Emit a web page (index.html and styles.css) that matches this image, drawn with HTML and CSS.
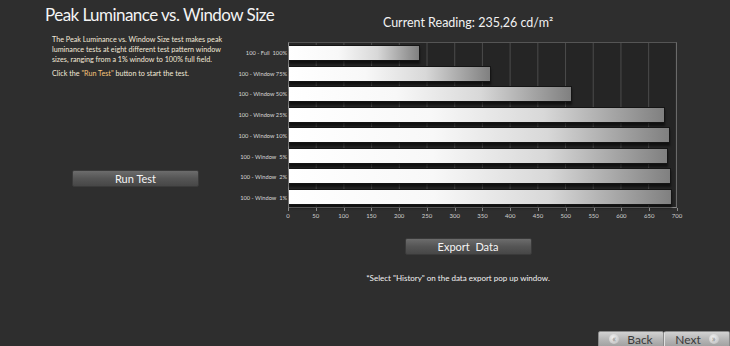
FILE: index.html
```html
<!DOCTYPE html>
<html lang="en">
<head>
  <meta charset="UTF-8" />
  <meta name="viewport" content="width=device-width, initial-scale=1" />
  <title>Peak Luminance vs. Window Size</title>
  <link rel="stylesheet" href="styles.css">
</head>
<body>

  <div class="screen">
    <section class="intro">
      <h1 class="title">Peak Luminance vs. Window Size</h1>
      <p class="desc">The Peak Luminance vs. Window Size test makes peak luminance tests at eight different test pattern window sizes, ranging from a 1% window to 100% full field.</p>
      <p class="desc">Click the <span class="hl">"Run Test"</span> button to start the test.</p>
      <button class="btn run-btn">Run Test</button>
    </section>

    <section class="results">
      <h2 class="reading">Current Reading: 235,26 cd/m²</h2>

      <div class="chart">
        <div class="y-labels">
          <span>100 - Full  100%</span>
          <span>100 - Window 75%</span>
          <span>100 - Window 50%</span>
          <span>100 - Window 25%</span>
          <span>100 - Window 10%</span>
          <span>100 - Window  5%</span>
          <span>100 - Window  2%</span>
          <span>100 - Window  1%</span>
        </div>
        <div class="plot">
          <div class="row"><div class="bar" style="width: 33.6%"></div></div>
          <div class="row"><div class="bar" style="width: 51.9%"></div></div>
          <div class="row"><div class="bar" style="width: 72.9%"></div></div>
          <div class="row"><div class="bar" style="width: 96.9%"></div></div>
          <div class="row"><div class="bar" style="width: 98.2%"></div></div>
          <div class="row"><div class="bar" style="width: 97.7%"></div></div>
          <div class="row"><div class="bar" style="width: 98.5%"></div></div>
          <div class="row"><div class="bar" style="width: 98.8%"></div></div>
        </div>
        <div class="x-axis">
          <span>0</span><span>50</span><span>100</span><span>150</span><span>200</span>
          <span>250</span><span>300</span><span>350</span><span>400</span><span>450</span>
          <span>500</span><span>550</span><span>600</span><span>650</span><span>700</span>
        </div>
      </div>

      <button class="btn export-btn">Export&nbsp; Data</button>
      <p class="note">*Select "History" on the data export pop up window.</p>
    </section>

    <nav class="pager">
      <button class="nav-btn"><span class="nav-icon">&laquo;</span>Back</button>
      <button class="nav-btn">Next<span class="nav-icon">&raquo;</span></button>
    </nav>
  </div>

</body>
</html>
```

FILE: styles.css
```css
body {
  margin: 0;
  padding: 0;
  background-color: #2e2e2e;
  font-family: Lato, 'Open Sans', sans-serif;
  color: #f2f2f2;
}

.screen {
  width: 730px;
  height: 346px;
  overflow: hidden;
  display: grid;
  grid-template-columns: 230px 1fr;
  grid-template-rows: 1fr auto;
}

/* left column */
.intro {
  padding-top: 4px;
}

.title {
  margin: 0 0 0 45px;
  font-size: 17px;
  font-weight: 400;
  letter-spacing: -0.55px;
  line-height: 22px;
  color: #f4f4f4;
  white-space: nowrap;
}

.desc {
  margin: 9px 0 0 52px;
  width: 172px;
  font-size: 7.2px;
  line-height: 10px;
  color: #f3e9d8;
}
.desc + .desc {
  margin-top: 4px;
}

.hl {
  color: #f6c57c;
}

.btn {
  display: block;
  width: 127px;
  height: 17px;
  padding: 0;
  font-family: Lato, 'Open Sans', sans-serif;
  font-size: 11px;
  color: #f4f4f4;
  background: linear-gradient(#6c6c6c, #555 50%, #474747);
  border: 1px solid #3a3a3a;
  border-radius: 2px;
  cursor: pointer;
}

.run-btn {
  margin: 91px 0 0 72px;
}

/* right column */
.results {
  width: 476px;
  text-align: center;
}

.reading {
  margin: 14px 0 0;
  font-size: 12.5px;
  font-weight: 400;
  line-height: 18px;
  color: #f2f2f2;
}

.chart {
  display: grid;
  grid-template-columns: 58px 389px;
  grid-template-rows: 166px auto;
  margin-top: 10px;
  text-align: left;
}

.y-labels {
  display: flex;
  flex-direction: column;
  font-size: 5.7px;
  color: #d8d8d8;
}
.y-labels span {
  flex: 1;
  display: flex;
  align-items: center;
  justify-content: flex-end;
  padding-right: 1px;
  white-space: pre;
}

.plot {
  display: flex;
  flex-direction: column;
  box-sizing: border-box;
  border-top: 1px solid #555;
  border-right: 1px solid #6a6a6a;
  border-left: 1px solid #8a8a8a;
  border-bottom: 1px solid #8a8a8a;
  background-color: #252525;
  background-image: linear-gradient(to right, #4a4a4a 1px, transparent 1px);
  background-size: 27.71px 100%;
  background-position: -1px 0;
}

.row {
  flex: 1;
  display: flex;
  align-items: flex-start;
  padding-top: 2px;
}

.bar {
  height: 14px;
  border: 1px solid #151515;
  border-left: none;
  background: linear-gradient(to right, #fff 0%, #f8f8f8 38%, #d8d8d8 68%, #808080 100%);
  box-shadow: 0 3px 2px rgba(0, 0, 0, 0.55);
}

.x-axis {
  grid-column: 2;
  display: flex;
  justify-content: space-between;
  font-size: 6px;
  color: #d0d0d0;
  padding-top: 4px;
}
.x-axis span {
  width: 0;
  display: flex;
  justify-content: center;
  position: relative;
}
.x-axis span::before {
  content: "";
  position: absolute;
  top: -4px;
  left: 0;
  width: 1px;
  height: 3px;
  background: #8a8a8a;
}

.export-btn {
  margin: 19px auto 0;
}

.note {
  margin: 18px 20px 0 0;
  font-size: 8px;
  color: #f2f2f2;
}

/* bottom navigation */
.pager {
  grid-column: 1 / 3;
  justify-self: end;
  display: flex;
  margin-bottom: -3px;
}

.nav-btn {
  display: flex;
  align-items: center;
  justify-content: center;
  gap: 8px;
  width: 66px;
  height: 18px;
  padding: 0 0 2px;
  font-family: Lato, 'Open Sans', sans-serif;
  font-size: 12px;
  color: #3a3a3a;
  background: linear-gradient(#d2d2d2, #b4b4b4 50%, #9c9c9c);
  border: 1px solid #8a8a8a;
  border-radius: 2px 2px 0 0;
  cursor: pointer;
}
.nav-btn + .nav-btn {
  border-left: 1px solid #e0e0e0;
}

.nav-icon {
  display: inline-flex;
  align-items: center;
  justify-content: center;
  width: 10px;
  height: 10px;
  border-radius: 50%;
  background: radial-gradient(circle at 40% 35%, #f0f0f0, #b8b8b8);
  font-size: 9px;
  line-height: 10px;
  color: #8a8a8a;
}
```
